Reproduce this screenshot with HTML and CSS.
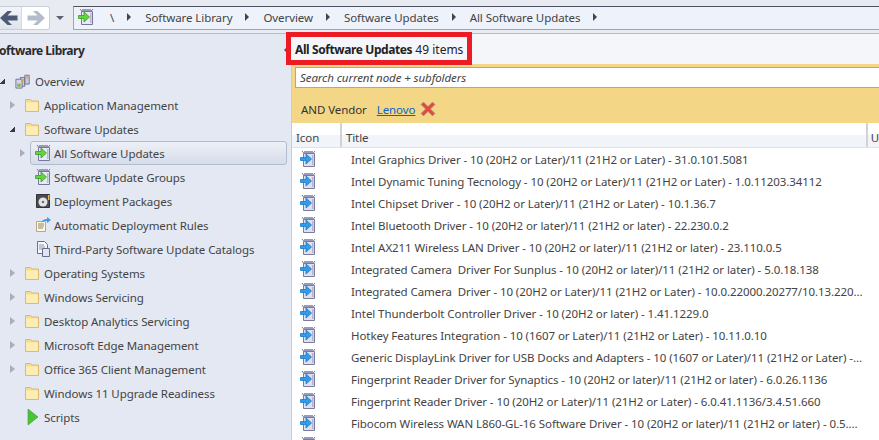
FILE: index.html
```html
<!DOCTYPE html>
<html lang="en">
<head>
    <meta charset="UTF-8">
    <title>All Software Updates</title>
    <link rel="stylesheet" href="styles.css">
</head>
<body>
    <svg class="defs" width="0" height="0">
        <symbol id="folder" viewBox="0 0 16 16">
            <path d="M1.500 2.500h5l1.500 1.500h6.500v10.500h-13z" fill="#f6dc93" stroke="#d8bb74"/>
            <path d="M2 5.500h12v8.500h-12z" fill="#fcedb4"/>
        </symbol>
        <symbol id="pkg-green" viewBox="0 0 16 18">
            <path d="M2 1l2.500 3M15 1l-2.500 3" stroke="#77779c" fill="none"/>
            <path d="M4 1h9v2h-9z" fill="#9a9abc"/>
            <path d="M3.500 3.500h11v13h-11z" fill="#e9e9f4" stroke="#77779c"/>
            <path d="M12 5h1.500v10h-1.500z" fill="#b8b8d2"/>
            <path d="M.5 7.500h5.500v-3.500l5.500 5-5.500 5v-3.500h-5.500z" fill="#62d63c" stroke="#3a9d24" stroke-width=".8"/>
        </symbol>
        <symbol id="pkg-blue" viewBox="0 0 16 18">
            <path d="M2 1l2.500 3M15 1l-2.500 3" stroke="#77779c" fill="none"/>
            <path d="M4 1h9v2h-9z" fill="#9a9abc"/>
            <path d="M3.500 3.500h11v13h-11z" fill="#dfe0ee" stroke="#7b7b9e"/>
            <path d="M12 5h1.500v10h-1.500z" fill="#b3b3cf"/>
            <path d="M.5 7.500h5.500v-3.500l5.500 5-5.500 5v-3.500h-5.500z" fill="#2f9cec" stroke="#1b78c4" stroke-width=".8"/>
        </symbol>
        <symbol id="disc" viewBox="0 0 16 16">
            <path d="M1.500 1.500h13v13h-13z" fill="#4a4a58" stroke="#333"/>
            <circle cx="8" cy="9" r="4.500" fill="#e4e4e4"/>
            <circle cx="8" cy="9" r="1.300" fill="#6a7a60"/>
            <path d="M13 2h1.500v5h-1.500z" fill="#e8b93c"/>
        </symbol>
        <symbol id="rule" viewBox="0 0 16 16">
            <path d="M1.500 4.500h9v10h-9z" fill="#fdf6e0" stroke="#b9a888"/>
            <path d="M3 7h6M3 9h6M3 11h5" stroke="#8b8470"/>
            <path d="M6 6c1-3 3-4 6-4v-2l4 3-4 3v-2c-2 0-4 0-6 2z" fill="#3f9fe6"/>
        </symbol>
        <symbol id="catalog" viewBox="0 0 16 16">
            <path d="M2.500 .5h7l3 3v9h-10z" fill="#f4f6fb" stroke="#67708a"/>
            <path d="M4 4h5M4 6h6M4 8h6" stroke="#8d97b5"/>
            <path d="M7.500 7.500h7v8h-7z" fill="#dfe5f2" stroke="#67708a"/>
        </symbol>
        <symbol id="overview" viewBox="0 0 18 18">
            <path d="M6 5h5v10h-5zM11 2.500h5v10h-5z" fill="#c9c9dc" stroke="#70708f"/>
            <path d="M1 7h7v10h-7z" fill="#d4d4e4" stroke="#70708f"/>
            <path d="M12 4h3v2h-3zM7 7h3v2h-3z" fill="#e2a63a"/>
            <path d="M2.500 12h4v3.500h-4z" fill="#8ab758"/>
        </symbol>
    </svg>

    <div class="toolbar">
        <div class="nav-btns">
            <span class="nav-btn back"><svg viewBox="0 0 18 16" width="18" height="16"><path d="M0 8l7.500-7h4.500l-4.500 4.500h10v5h-10l4.500 4.500h-4.500z" fill="#4d5a75"/></svg></span>
            <span class="nav-btn"><svg viewBox="0 0 18 16" width="18" height="16"><path d="M18 8l-7.500-7h-4.500l4.500 4.500h-10v5h10l-4.500 4.500h4.500z" fill="#b3bcca"/></svg></span>
        </div>
        <span class="nav-drop"></span>
        <div class="crumbs">
            <svg class="crumb-icon" width="16" height="18"><use href="#pkg-green"/></svg>
            <span class="crumb-root">\</span><i class="sep"></i>
            <span>Software Library</span><i class="sep"></i>
            <span>Overview</span><i class="sep"></i>
            <span>Software Updates</span><i class="sep"></i>
            <span>All Software Updates</span><i class="sep"></i>
        </div>
    </div>

    <div class="main">
        <div class="side">
            <div class="side-head">
                <span>Software Library</span>
                <i class="collapse"></i>
            </div>
            <ul class="tree">
                <li class="l0"><i class="tw open"></i><svg width="16" height="16"><use href="#overview"/></svg>Overview</li>
                <li class="l1"><i class="tw"></i><svg width="16" height="16"><use href="#folder"/></svg>Application Management</li>
                <li class="l1"><i class="tw open"></i><svg width="16" height="16"><use href="#folder"/></svg>Software Updates</li>
                <li class="l2"><i class="tw"></i><div class="sel-box"><svg width="16" height="18"><use href="#pkg-green"/></svg>All Software Updates</div></li>
                <li class="l2"><i class="tw none"></i><div class="item-box"><svg width="16" height="18"><use href="#pkg-green"/></svg>Software Update Groups</div></li>
                <li class="l2"><i class="tw none"></i><div class="item-box"><svg width="16" height="16"><use href="#disc"/></svg>Deployment Packages</div></li>
                <li class="l2"><i class="tw none"></i><div class="item-box"><svg width="16" height="16"><use href="#rule"/></svg>Automatic Deployment Rules</div></li>
                <li class="l2"><i class="tw none"></i><div class="item-box"><svg width="16" height="16"><use href="#catalog"/></svg>Third-Party Software Update Catalogs</div></li>
                <li class="l1"><i class="tw"></i><svg width="16" height="16"><use href="#folder"/></svg>Operating Systems</li>
                <li class="l1"><i class="tw"></i><svg width="16" height="16"><use href="#folder"/></svg>Windows Servicing</li>
                <li class="l1"><i class="tw"></i><svg width="16" height="16"><use href="#folder"/></svg>Desktop Analytics Servicing</li>
                <li class="l1"><i class="tw"></i><svg width="16" height="16"><use href="#folder"/></svg>Microsoft Edge Management</li>
                <li class="l1"><i class="tw"></i><svg width="16" height="16"><use href="#folder"/></svg>Office 365 Client Management</li>
                <li class="l1"><i class="tw none"></i><svg width="16" height="16"><use href="#folder"/></svg>Windows 11 Upgrade Readiness</li>
                <li class="l1"><i class="tw none"></i><svg width="16" height="16" viewBox="0 0 16 16"><path d="M4 0l10 8-10 8z" fill="#4cc23a" stroke="#3a9d2a" stroke-width=".6"/></svg>Scripts</li>
            </ul>
        </div>

        <div class="content">
            <div class="head-band">
                <div class="title-box"><b>All Software Updates</b> 49 items</div>
            </div>
            <div class="search-wrap">
                <div class="search">Search current node + subfolders</div>
            </div>
            <div class="filter">
                <span>AND Vendor</span>
                <a class="vendor">Lenovo</a>
                <svg width="16" height="16" viewBox="0 0 16 16"><path d="M1 3.500l2.500-2.500 4.500 4.500 4.500-4.500 2.500 2.500-4.500 4.500 4.500 4.500-2.500 2.500-4.500-4.500-4.500 4.500-2.500-2.500 4.500-4.500z" fill="#e2483c" stroke="#a9a09a" stroke-width=".7"/></svg>
            </div>
            <div class="cols">
                <div class="col col-icon">Icon</div>
                <div class="col col-title">Title</div>
                <div class="col col-u">U</div>
            </div>
            <div class="rows">
                <div class="row"><svg width="16" height="18"><use href="#pkg-blue"/></svg><span class="t">Intel Graphics Driver - 10 (20H2 or Later)/11 (21H2 or Later) - 31.0.101.5081</span><span class="u">6</span></div>
                <div class="row"><svg width="16" height="18"><use href="#pkg-blue"/></svg><span class="t">Intel Dynamic Tuning Tecnology - 10 (20H2 or Later)/11 (21H2 or Later) - 1.0.11203.34112</span><span class="u">5</span></div>
                <div class="row"><svg width="16" height="18"><use href="#pkg-blue"/></svg><span class="t">Intel Chipset Driver - 10 (20H2 or Later)/11 (21H2 or Later) - 10.1.36.7</span><span class="u">3</span></div>
                <div class="row"><svg width="16" height="18"><use href="#pkg-blue"/></svg><span class="t">Intel Bluetooth Driver - 10 (20H2 or later)/11 (21H2 or later) - 22.230.0.2</span><span class="u">6</span></div>
                <div class="row"><svg width="16" height="18"><use href="#pkg-blue"/></svg><span class="t">Intel AX211 Wireless LAN Driver - 10 (20H2 or later)/11 (21H2 or later) - 23.110.0.5</span><span class="u">1</span></div>
                <div class="row"><svg width="16" height="18"><use href="#pkg-blue"/></svg><span class="t">Integrated Camera  Driver For Sunplus - 10 (20H2 or later)/11 (21H2 or later) - 5.0.18.138</span><span class="u">3</span></div>
                <div class="row"><svg width="16" height="18"><use href="#pkg-blue"/></svg><span class="t">Integrated Camera  Driver - 10 (20H2 or Later)/11 (21H2 or Later) - 10.0.22000.20277/10.13.220...</span><span class="u">6</span></div>
                <div class="row"><svg width="16" height="18"><use href="#pkg-blue"/></svg><span class="t">Intel Thunderbolt Controller Driver - 10 (20H2 or later) - 1.41.1229.0</span><span class="u">5</span></div>
                <div class="row"><svg width="16" height="18"><use href="#pkg-blue"/></svg><span class="t">Hotkey Features Integration - 10 (1607 or Later)/11 (21H2 or Later) - 10.11.0.10</span><span class="u">7</span></div>
                <div class="row"><svg width="16" height="18"><use href="#pkg-blue"/></svg><span class="t">Generic DisplayLink Driver for USB Docks and Adapters - 10 (1607 or Later)/11 (21H2 or Later) -...</span><span class="u">0</span></div>
                <div class="row"><svg width="16" height="18"><use href="#pkg-blue"/></svg><span class="t">Fingerprint Reader Driver for Synaptics - 10 (20H2 or later)/11 (21H2 or later) - 6.0.26.1136</span><span class="u">6</span></div>
                <div class="row"><svg width="16" height="18"><use href="#pkg-blue"/></svg><span class="t">Fingerprint Reader Driver - 10 (20H2 or Later)/11 (21H2 or Later) - 6.0.41.1136/3.4.51.660</span><span class="u">1</span></div>
                <div class="row"><svg width="16" height="18"><use href="#pkg-blue"/></svg><span class="t">Fibocom Wireless WAN L860-GL-16 Software Driver - 10 (20H2 or later)/11 (21H2 or later) - 0.5....</span><span class="u">6</span></div>
                <div class="row"><svg width="16" height="18"><use href="#pkg-blue"/></svg></div>
            </div>
        </div>
    </div>
</body>
</html>
```

FILE: styles.css
```css
* {
    box-sizing: border-box;
}
html, body {
    margin: 0;
    height: 100%;
}
body {
    width: 879px;
    height: 440px;
    overflow: hidden;
    background: #e9edf5;
    color: #444;
    font-family: "Noto Sans", "Open Sans", sans-serif;
    font-size: 11.5px;
    letter-spacing: -0.08px;
    display: flex;
    flex-direction: column;
}
.defs {
    position: absolute;
}
.toolbar {
    height: 34px;
    flex-shrink: 0;
    display: flex;
    align-items: flex-start;
    padding-top: 6px;
    background: #e8ebf1;
    border-bottom: 1px solid #b6bcc8;
}
.nav-btns {
    width: 50px;
    height: 24px;
    display: flex;
    background: #fff;
    border: 1px solid #c9cfda;
    border-left: none;
    border-radius: 0 3px 3px 0;
}
.nav-btn {
    flex: 1;
    display: flex;
    align-items: center;
    padding-left: 5px;
}
.nav-btn.back {
    flex: 0 0 22px;
    padding-left: 0;
    background: linear-gradient(#f2f4f8, #dfe4ec);
    border-right: 1px solid #d5dae3;
}
.nav-drop {
    width: 0;
    height: 0;
    margin: 10px 0 0 6px;
    border: 4px solid transparent;
    border-top: 4px solid #5c6270;
    border-bottom: none;
}
.crumbs {
    flex: 1;
    height: 24px;
    margin-left: 9px;
    display: flex;
    align-items: center;
    padding: 0 0 2px 4px;
    background: #eef2fb;
    border: 1px solid #9ea4b4;
    border-top-color: #4d5160;
    border-right: none;
    white-space: nowrap;
}
.crumb-icon {
    margin-right: 16px;
}
.sep {
    width: 0;
    height: 0;
    margin: 0 14px 0 13px;
    border: 4px solid transparent;
    border-left: 4px solid #444;
    border-right: none;
}
.main {
    flex: 1;
    display: flex;
    min-height: 0;
}
.side {
    width: 292px;
    flex-shrink: 0;
    background: #e3e8f2;
    border-right: 1px solid #c6cdd9;
}
.side-head {
    height: 32px;
    display: flex;
    align-items: center;
    justify-content: space-between;
    padding-right: 3px;
    font-size: 12px;
    font-weight: 700;
    letter-spacing: -0.5px;
    color: #2b2b2b;
}
.side-head span {
    margin-left: -7px;
}
.collapse {
    width: 0;
    height: 0;
    border: 4px solid transparent;
    border-right: 4px solid #555;
    border-left: none;
}
.tree {
    list-style: none;
    margin: 3px 0 0;
    padding: 0;
}
.tree li {
    height: 24px;
    display: flex;
    align-items: center;
    white-space: nowrap;
    margin-right: 4px;
}
.tree svg {
    flex-shrink: 0;
    margin-right: 4px;
}
.l0 .tw {
    margin-right: 10px;
}
.l1 {
    padding-left: 10px;
}
.l1 .tw {
    margin-right: 9px;
}
.l2 {
    padding-left: 20px;
}
.l2 .tw {
    margin-right: 5px;
}
.tw {
    width: 0;
    height: 0;
    flex-shrink: 0;
    border: 4px solid transparent;
    border-left: 5px solid #a8adb8;
    border-right: none;
}
.tw.open {
    width: 5px;
    height: 5px;
    border: none;
    background: linear-gradient(135deg, transparent 50%, #3a3a3a 50%);
}
.tw.none {
    visibility: hidden;
}
.sel-box, .item-box {
    flex: 1;
    height: 24px;
    display: flex;
    align-items: center;
    padding-left: 4px;
    border: 1px solid transparent;
    border-radius: 3px;
}
.sel-box {
    border-color: #b3bccd;
    background: linear-gradient(#edf0f7, #d6dce9);
}
.sel-box svg, .item-box svg {
    margin-right: 3px;
}
.content {
    flex: 1;
    min-width: 0;
    background: #fff;
    display: flex;
    flex-direction: column;
}
.head-band {
    height: 32px;
    background: #f5f6fa;
    border-bottom: 2px solid #f3d787;
}
.title-box {
    width: 186px;
    height: 33px;
    margin: -2px 0 0 -6px;
    padding-left: 4px;
    line-height: 25px;
    border: 5px solid #ed1c24;
    background: #f5f6fa;
    color: #222;
    font-size: 12px;
    letter-spacing: 0;
    white-space: nowrap;
    position: relative;
}
.title-box b {
    font-weight: 700;
    letter-spacing: -0.4px;
}
.search-wrap {
    padding: 1px 0 0 3px;
    background: #f3d787;
}
.search {
    height: 21px;
    line-height: 19px;
    padding-left: 4px;
    border: 1px solid #a5a7b4;
    border-right: none;
    background: #fff;
    font-style: italic;
}
.filter {
    height: 35px;
    display: flex;
    align-items: center;
    padding: 7px 0 0 9px;
    background: #f3d787;
    color: #333;
}
.vendor {
    margin-left: 10px;
    color: #0f62c8;
    text-decoration: underline;
}
.filter svg {
    margin-left: 5px;
}
.cols {
    height: 25px;
    flex-shrink: 0;
    display: flex;
    background: linear-gradient(#fff 52%, #f1f4f8 52%);
    border-bottom: 1px solid #e2e2e2;
}
.col {
    padding: 7px 0 0 4px;
    border-right: 2px solid #d2d2d2;
}
.col-icon {
    width: 50px;
}
.col-title {
    width: 527px;
}
.col-u {
    border-right: none;
    padding-left: 3px;
}
.rows {
    flex: 1;
    overflow: hidden;
}
.row {
    height: 22px;
    display: flex;
    align-items: center;
    padding-left: 8px;
    white-space: nowrap;
}
.row svg {
    flex-shrink: 0;
}
.row .t {
    flex: 0 0 525px;
    margin-left: 35px;
    white-space: pre;
    overflow: hidden;
}
.row .u {
    margin-left: 6px;
    flex-shrink: 0;
}
```
